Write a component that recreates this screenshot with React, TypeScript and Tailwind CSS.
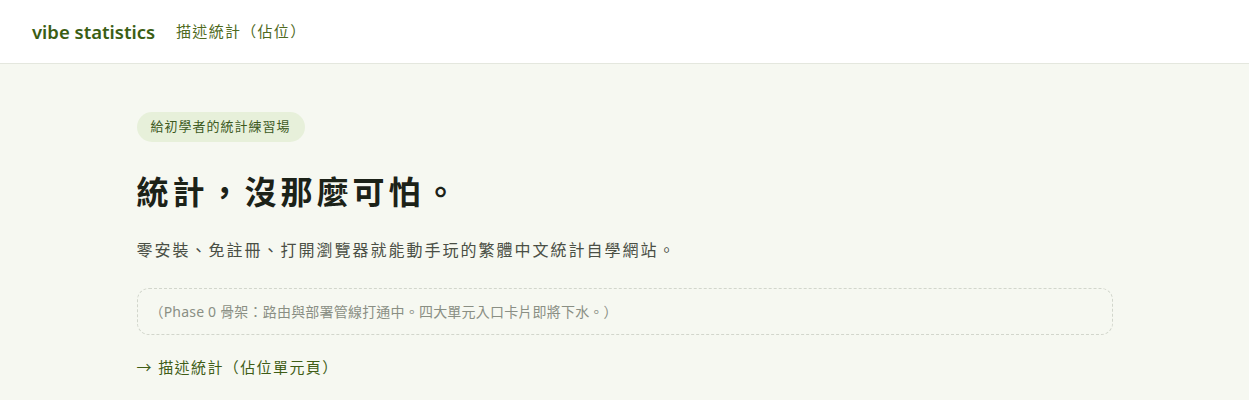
import React from 'react';

const font = { fontFamily: '"Noto Sans", "Noto Sans CJK TC", sans-serif' };

export default function App() {
  return (
    <div className="min-h-screen bg-[#f6f8f1] text-[#1f2419] [text-spacing-trim:space-all]" style={font}>
      <header className="h-16 bg-white border-b border-[#e4e7de] flex items-center px-8 gap-[21px]">
        <a className="text-[18.5px] font-semibold text-[#3b5e14]">vibe statistics</a>
        <a className="text-[15px] tracking-[1.3px] text-[#4f6a1e]">描述統計（佔位）</a>
      </header>

      <main className="max-w-5xl mx-auto px-6 pt-12">
        <span className="inline-block rounded-full bg-[#e7f0da] px-3.5 py-[5px] text-[13px] tracking-[1px] text-[#3d5a1e]">
          給初學者的統計練習場
        </span>
        <h1 className="mt-[30px] text-[32px] font-bold leading-tight tracking-[4px] text-[#1c2218]">統計，沒那麼可怕。</h1>
        <p className="mt-[26px] text-[16px] tracking-[2px] text-[#4a4f45]">
          零安裝、免註冊、打開瀏覽器就能動手玩的繁體中文統計自學網站。
        </p>
        <div className="mt-[26px] rounded-xl border border-dashed border-[#d2d6cc] px-3 py-3 text-[14px] tracking-[0.2px] text-[#8a8f84]">
          （Phase 0 骨架：路由與部署管線打通中。四大單元入口卡片即將下水。）
        </div>
        <a className="mt-[21px] block text-[15px] tracking-[1.4px] text-[#3f5d16]">→ 描述統計（佔位單元頁）</a>
      </main>
    </div>
  );
}
